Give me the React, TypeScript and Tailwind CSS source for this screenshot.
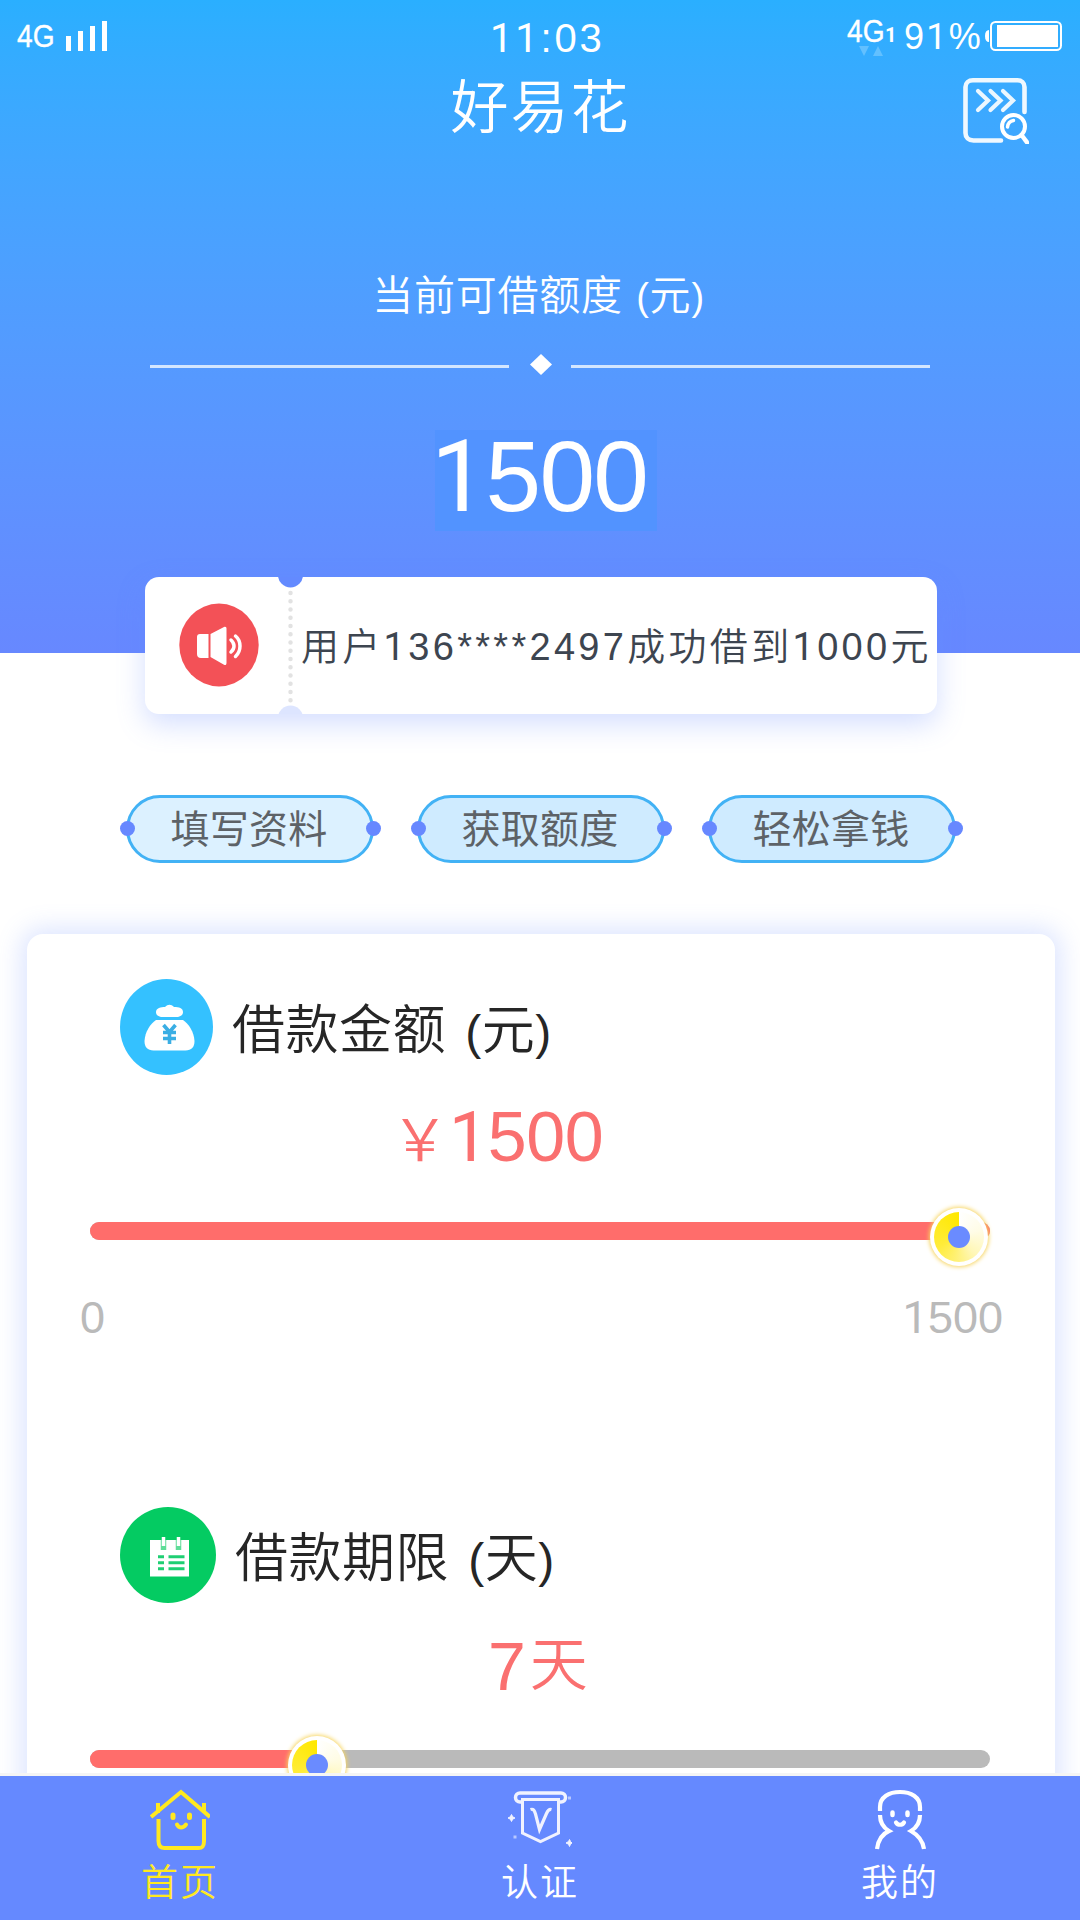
import type { ReactNode } from "react";

const STEPS = [
  { label: "填写资料", bg: "bg-[#dcf1ff]" },
  { label: "获取额度", bg: "bg-[#cfebff]" },
  { label: "轻松拿钱", bg: "bg-[#cfebff]" },
];

// Liberation's "1" has a foot, so that digit is set in Roboto
function Num({ children }: { children: string }) {
  return (
    <>
      {children.split(/(1)/).map((part, i) =>
        part === "1" ? (
          <span key={i} className="font-['Roboto'] font-normal">1</span>
        ) : (
          part
        ),
      )}
    </>
  );
}

function StatusBar() {
  return (
    <div className="flex h-[60px] items-start text-white">
      <span className="mt-[20px] ml-[17px] w-[49px] origin-left scale-x-[0.88] text-[32px] leading-[32px] [-webkit-text-stroke:0.4px_white]">
        4G
      </span>
      <div className="mt-[21px] flex h-[30px] items-end gap-[7px]">
        <i className="h-[15px] w-[5px] bg-white" />
        <i className="h-[20px] w-[5px] bg-white" />
        <i className="h-[25px] w-[5px] bg-white" />
        <i className="h-[30px] w-[5px] bg-white" />
      </div>
      <span className="mt-[18px] ml-[383px] w-[120px] text-[40px] leading-[40px] tracking-[2.8px]">
        <Num>11:03</Num>
      </span>
      <div className="mt-[15px] ml-[237px] w-[56px]">
        <div className="flex items-baseline">
          <span className="w-[38px] origin-left scale-x-[0.88] text-[32px] leading-[32px] [-webkit-text-stroke:0.4px_white]">
            4G
          </span>
          <span className="font-['Roboto'] text-[20px] leading-[20px] font-bold">1</span>
        </div>
        <svg className="-mt-[1px] ml-[12px]" width="24" height="10" viewBox="0 0 24 10">
          <path d="M0 0h10L5 10zM14 10h10L19 0z" fill="#62c0ff" />
        </svg>
      </div>
      <span className="mt-[19px] w-[82px] pl-[1px] text-[36px] leading-[36px] tracking-[2.2px]">
        <Num>91%</Num>
      </span>
      <svg className="mt-[21px]" width="78" height="30" viewBox="0 0 78 30">
        <path d="M4 9v12c-2.500 0-4-2-4-6s1.500-6 4-6z" fill="#fff" />
        <rect x="6" y="1" width="70" height="28" rx="4.500" fill="none" stroke="#fff" strokeWidth="2" />
        <rect x="12" y="4" width="61" height="22" fill="#fff" />
      </svg>
    </div>
  );
}

function RecordsIcon() {
  return (
    <svg width="66" height="66" viewBox="0 0 66 66" fill="none" stroke="#fff" strokeLinecap="round">
      <path d="M61.500 34V9c0-4-3-6.700-7-6.700H10c-4.500 0-7.500 2.700-7.500 6.700v46c0 4.500 3 7.500 8 7.500H38" strokeWidth="4.600" strokeOpacity="0.920" />
      <path d="M15 13l10 9.500-10 9.500M27.500 13l10 9.500-10 9.500M40 13l10 9.500-10 9.500" strokeWidth="4.200" strokeOpacity="0.900" />
      <circle cx="50.500" cy="48.500" r="11.500" strokeWidth="4" />
      <path d="M44.500 49c.5-4 3-6 6-6.500" strokeWidth="3.500" />
      <path d="M58.500 57l6 8" strokeWidth="4.500" />
    </svg>
  );
}

function Header() {
  return (
    <header className="h-[653px] bg-linear-to-b from-[#2aafff] to-[#6788ff] text-white">
      <StatusBar />
      <div className="mt-[18px] grid h-[66px] grid-cols-3">
        <h1 className="col-start-2 pl-[1px] text-center text-[58px] leading-[60px] font-[350] tracking-[2px]">
          好易花
        </h1>
        <div className="mr-[51px] justify-self-end">
          <RecordsIcon />
        </div>
      </div>
      <p className="mt-[131px] pr-[3px] text-center text-[41px] leading-[42px] font-[350] tracking-[0.8px] [word-spacing:1px]">
        当前可借额度 <span className="text-[38px]">(</span>元<span className="text-[38px]">)</span>
      </p>
      <div className="mx-[150px] mt-[36px] flex h-[21px] items-center">
        <i className="mt-[4px] h-[3px] flex-1 bg-[#d3e6ff]" />
        <svg className="mr-[19px] ml-[21px]" width="22" height="21" viewBox="0 0 22 21">
          <path d="M11 0l11 10.500L11 21 0 10.500z" fill="#fff" />
        </svg>
        <i className="mt-[4px] h-[3px] flex-1 bg-[#d3e6ff]" />
      </div>
      <div className="mt-[55px] ml-[435px] h-[101px] w-[222px] bg-[#5293ff] -indent-[4px] text-[100px] leading-[93px] tracking-[-1.7px]">
        <Num>1500</Num>
      </div>
    </header>
  );
}

function Notice() {
  return (
    <div className="relative -mt-[76px] ml-[145px] flex h-[137px] w-[792px] items-center rounded-[14px] bg-white pl-[34px] shadow-[0_10px_28px_rgba(102,136,255,0.28)]">
      <svg className="-mt-[2px]" width="80" height="84" viewBox="0 0 80 84">
        <ellipse cx="40" cy="42" rx="39.700" ry="41.500" fill="#f35157" />
        <path d="M18 34a3 3 0 0 1 3-3h8.500v24H22a4 4 0 0 1-4-4zM31.500 31L45 24c1.500-.8 2.500 0 2.500 1.500V60c0 1.800-1 2.500-2.500 1.700L31.500 54z" fill="#fff" />
        <path d="M52 37c4 3.500 4 8.500 0 12M56.500 33c6 5 6 15 0 20.500" fill="none" stroke="#fff" strokeWidth="3.500" strokeLinecap="round" />
      </svg>
      <svg className="ml-[19px]" width="25" height="137" viewBox="0 0 25 137">
        <circle cx="12.500" cy="-2" r="12.500" fill="#638aff" />
        <circle cx="12.500" cy="141" r="12.500" fill="#dde5ff" />
        <path d="M12.500 16v110" stroke="#e2e2e2" strokeWidth="4.500" strokeLinecap="round" strokeDasharray="0 8.250" />
      </svg>
      <span className="-mr-4 -ml-[2px] pt-[2px] text-[38px] leading-[38px] font-[350] tracking-[3.3px] whitespace-nowrap text-[#3d4550]">
        用户<Num>136****2497</Num>成功借到<Num>1000</Num>元
      </span>
    </div>
  );
}

function Steps() {
  return (
    <div className="mt-[81px] ml-[126px] flex gap-[43px]">
      {STEPS.map((s) => (
        <div
          key={s.label}
          className={`relative h-[68px] w-[248px] rounded-full border-[3px] border-[#42b2f5] ${s.bg} pr-[2px] text-center text-[39px] leading-[63px] tracking-[0.3px] text-[#5d6267]`}
        >
          {s.label}
          <i className="absolute top-[23px] -left-[9px] size-[15px] rounded-full bg-[#6788ff]" />
          <i className="absolute top-[23px] -right-[10px] size-[15px] rounded-full bg-[#6788ff]" />
        </div>
      ))}
    </div>
  );
}

function Slider({ value }: { value: number }) {
  return (
    <div className="relative ml-[63px] h-[18px] w-[900px] rounded-full bg-[#bababa]">
      <div className="h-full rounded-full bg-[#ff6d6b]" style={{ width: `${value >= 96 ? 100 : value}%` }} />
      <div
        className="absolute -top-[14px] flex size-[58px] -translate-x-1/2 items-center justify-center rounded-full bg-white shadow-[0_0_4px_1px_#f7d560]"
        style={{ left: `${value}%` }}
      >
        <div className="flex size-[50px] items-center justify-center rounded-full bg-[conic-gradient(#ffffff_0%,#fffce6_20%,#fff7b8_38%,#fff176_52%,#ffec3a_68%,#ffe800_100%)]">
          <i className="size-[22px] rounded-full bg-[#6a8bff]" />
        </div>
      </div>
    </div>
  );
}

function MoneyIcon() {
  return (
    <svg width="93" height="96" viewBox="0 0 93 96">
      <ellipse cx="46.500" cy="48" rx="46.500" ry="48" fill="#34c1ff" />
      <path d="M41 38c-4-1-5-3-5-5 0-4 5-5 9-5 3-3 6-3 9 0 5 0 9 1 9 5 0 2-1 4-5 5z" fill="#fff" />
      <path d="M36 41h27c6 4 11 12 11.500 21 0 6-3 9.500-9 9.500H33.500c-6 0-9-3.500-9-9.500C25 53 30 45 36 41z" fill="#fff" />
      <path d="M43.500 46l6 7 6-7M43 53.500h13M43 59.500h13M49.500 53v12" fill="none" stroke="#3aaee4" strokeWidth="3.600" />
    </svg>
  );
}

function CalendarIcon() {
  return (
    <svg width="96" height="96" viewBox="0 0 96 96">
      <circle cx="48" cy="48" r="48" fill="#04cb62" />
      <path d="M30 33h39v36.500H30z" fill="#fff" />
      <path d="M43.500 33v10M58.500 33v10" stroke="#5fdd98" strokeWidth="5.500" />
      <path d="M43.500 30v9M58.500 30v9" stroke="#fff" strokeWidth="3.500" />
      <path d="M38 49.700h6M48.500 49.700h16M38 55.700h6M48.500 55.700h16M38 61.700h6M48.500 61.700h16" stroke="#1fcf73" strokeWidth="3" />
    </svg>
  );
}

function SectionTitle({ icon, unit, children }: { icon: ReactNode; unit: string; children: ReactNode }) {
  return (
    <div className="flex h-[96px] items-center gap-[19px] pl-[93px]">
      {icon}
      <h2 className="pt-[10px] text-[53px] leading-[60px] font-[350] tracking-[0.5px] text-[#262626] [word-spacing:4px]">
        {children} <span className="text-[48px]">(</span>
        {unit}
        <span className="text-[48px]">)</span>
      </h2>
    </div>
  );
}

function LoanCard() {
  return (
    <section className="mt-[71px] ml-[27px] h-[900px] w-[1028px] rounded-[16px] bg-white pt-[45px] shadow-[0_0_24px_6px_rgba(102,136,255,0.22)]">
      <SectionTitle icon={<MoneyIcon />} unit="元">借款金额</SectionTitle>
      <div className="mt-[27px] ml-[364px] flex h-[70px] items-baseline text-[70px] leading-[70px] text-[#fa7070]">
        <span className="w-[58px] text-[58px] font-[350]">{"\uFFE5"}</span>
        <span className="tracking-[-0.5px]">
          <Num>1500</Num>
        </span>
      </div>
      <div className="mt-[50px]">
        <Slider value={96.55} />
      </div>
      <div className="mt-[55px] flex justify-between pr-[52px] pl-[53px] text-[45px] leading-[45px] text-[#bababa]">
        <span>0</span>
        <span>
          <Num>1500</Num>
        </span>
      </div>
      <div className="mt-[167px]">
        <SectionTitle icon={<CalendarIcon />} unit="天">借款期限</SectionTitle>
      </div>
      <div className="mt-[28px] ml-[461px] flex h-[70px] gap-[4px] text-[68px] leading-[70px] text-[#fa7070]">
        <span>7</span>
        <span className="text-[58px] leading-[68px] font-[350]">天</span>
      </div>
      <div className="mt-[49px]">
        <Slider value={25.2} />
      </div>
    </section>
  );
}

function HomeIcon() {
  return (
    <svg width="60" height="61" viewBox="0 0 60 61" fill="none" stroke="#ffe91f" strokeWidth="4">
      <path d="M1 28L31 3l29 25M8 24V14M54 24V14" />
      <path d="M8.500 30v22c0 5 2 7 6 7h34c4 0 5.500-2 5.500-7V30" />
      <path d="M27 35.500c2 4 6 4 9 0" strokeLinecap="round" />
      <path d="M23 26v2.500M39.500 26v2.500" strokeWidth="5" strokeLinecap="round" />
    </svg>
  );
}

function VerifyIcon() {
  return (
    <svg width="66" height="61" viewBox="0 0 66 61" fill="none" stroke="#f0f2ff" strokeWidth="3.500">
      <path d="M16 13h-3a4.500 4.500 0 0 1 0-9h41a4.500 4.500 0 0 1 0 9h-3" />
      <path d="M15.500 10.500h36V44L33.500 52.500 15.500 44z" strokeWidth="3" />
      <path d="M23.500 20.500c3-1 4 1 5 4.500l4 15.500 7-16c1.500-3.500 3-4.500 5-4" strokeWidth="3.200" />
      <path d="M4.500 25.500l1.200 2.300 2.300 1.200-2.300 1.200-1.200 2.300-1.200-2.300L1 29l2.300-1.200zM62.500 50.500l1 2 1.500 1.500-1.500 1.200-1 2.300-1-2.300-2.500-1.200 2.500-1.500z" strokeWidth="1" fill="#f0f2ff" />
      <path d="M8 46.500v3M62.500 7.500v3" strokeWidth="3" strokeOpacity="0.600" />
    </svg>
  );
}

function UserIcon() {
  return (
    <svg width="52" height="61" viewBox="0 0 52 61" fill="none" stroke="#fff" strokeWidth="4.200">
      <path d="M6 22v-4C6 8 15 3 26 3s20 5 20 15v4" />
      <path d="M6 26c0 8 4 13 9 16C8 45 4 52 3 60M46 26c0 8-4 13-9 16 7 4 12 11 13 18" />
      <path d="M22 33.500c2 3 6 3 8 0" strokeLinecap="round" />
      <path d="M18.500 23.500v2.500M33.500 23.500v2.500" strokeWidth="4.500" strokeLinecap="round" />
    </svg>
  );
}

function TabBar() {
  return (
    <nav className="grid h-[147px] grid-cols-3 border-t-[3px] border-[#f5f5f5] bg-[#6589ff] pt-[13px] text-[37px] leading-[40px] font-[350] tracking-[2px] text-white">
      <a className="flex flex-col items-center gap-[14px] text-[#ffe91f]">
        <HomeIcon />
        首页
      </a>
      <a className="flex flex-col items-center gap-[14px]">
        <VerifyIcon />
        认证
      </a>
      <a className="flex flex-col items-center gap-[14px]">
        <UserIcon />
        我的
      </a>
    </nav>
  );
}

export default function App() {
  return (
    <div className="h-[1920px] w-[1080px] overflow-hidden bg-white font-['Liberation_Sans','Noto_Sans_CJK_SC',sans-serif]">
      <main className="h-[1773px] overflow-hidden">
        <Header />
        <Notice />
        <Steps />
        <LoanCard />
      </main>
      <TabBar />
    </div>
  );
}
